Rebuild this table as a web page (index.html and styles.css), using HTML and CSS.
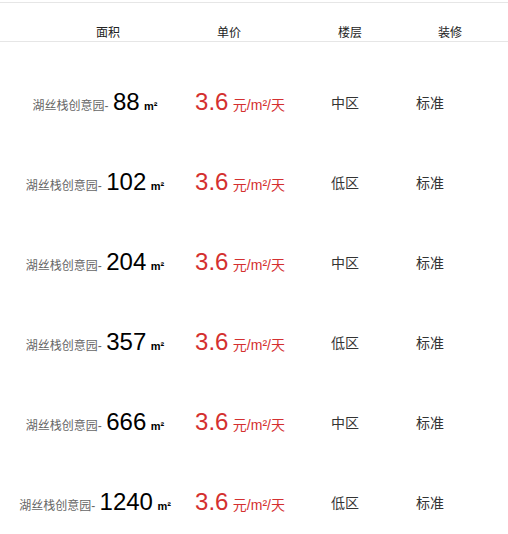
FILE: index.html
```html
<!DOCTYPE html>
<html lang="zh-CN">
<head>
  <meta charset="UTF-8" />
  <meta name="viewport" content="width=device-width, initial-scale=1.0"/>
  <title>房源列表</title>
  <link rel="stylesheet" href="styles.css">
</head>
<body>

  <div class="list-head">
    <div>面积</div>
    <div>单价</div>
    <div>楼层</div>
    <div>装修</div>
  </div>

  <div class="list">
    <div class="row">
      <div class="area"><span class="name">湖丝栈创意园-</span> <span class="num">88</span> <span class="unit">m²</span></div>
      <div class="price"><span class="num">3.6</span> <span class="unit">元/m²/天</span></div>
      <div class="floor">中区</div>
      <div class="deco">标准</div>
    </div>
    <div class="row">
      <div class="area"><span class="name">湖丝栈创意园-</span> <span class="num">102</span> <span class="unit">m²</span></div>
      <div class="price"><span class="num">3.6</span> <span class="unit">元/m²/天</span></div>
      <div class="floor">低区</div>
      <div class="deco">标准</div>
    </div>
    <div class="row">
      <div class="area"><span class="name">湖丝栈创意园-</span> <span class="num">204</span> <span class="unit">m²</span></div>
      <div class="price"><span class="num">3.6</span> <span class="unit">元/m²/天</span></div>
      <div class="floor">中区</div>
      <div class="deco">标准</div>
    </div>
    <div class="row">
      <div class="area"><span class="name">湖丝栈创意园-</span> <span class="num">357</span> <span class="unit">m²</span></div>
      <div class="price"><span class="num">3.6</span> <span class="unit">元/m²/天</span></div>
      <div class="floor">低区</div>
      <div class="deco">标准</div>
    </div>
    <div class="row">
      <div class="area"><span class="name">湖丝栈创意园-</span> <span class="num">666</span> <span class="unit">m²</span></div>
      <div class="price"><span class="num">3.6</span> <span class="unit">元/m²/天</span></div>
      <div class="floor">中区</div>
      <div class="deco">标准</div>
    </div>
    <div class="row">
      <div class="area"><span class="name">湖丝栈创意园-</span> <span class="num">1240</span> <span class="unit">m²</span></div>
      <div class="price"><span class="num">3.6</span> <span class="unit">元/m²/天</span></div>
      <div class="floor">低区</div>
      <div class="deco">标准</div>
    </div>
  </div>

</body>
</html>
```

FILE: styles.css
```css
body {
  margin: 0;
  padding-top: 2px;
  font-family: 'Liberation Sans', 'Noto Sans CJK SC', sans-serif;
  background-color: #fff;
  color: #333;
}

.list-head {
  display: grid;
  grid-template-columns: 120px 122px 120px 80px;
  padding-left: 48px;
  height: 38px;
  align-items: end;
  border-top: 1px solid #e6e6e6;
  border-bottom: 1px solid #e6e6e6;
  font-size: 12px;
  color: #222;
  text-align: center;
}

.list-head div {
  padding-bottom: 1px;
}

.list {
  padding-top: 20px;
}

.row {
  display: grid;
  grid-template-columns: 190px 100px 110px 60px;
  height: 80px;
  align-items: center;
  text-align: center;
}

.area .name {
  font-size: 12px;
  color: #666;
}

.area .num {
  font-size: 24px;
  color: #000;
}

.area .unit {
  font-size: 11px;
  color: #000;
  font-weight: bold;
}

.price {
  color: #d43030;
}

.price .num {
  font-size: 24px;
}

.price .unit {
  font-size: 14px;
}

.floor,
.deco {
  font-size: 14px;
  color: #333;
}
```
